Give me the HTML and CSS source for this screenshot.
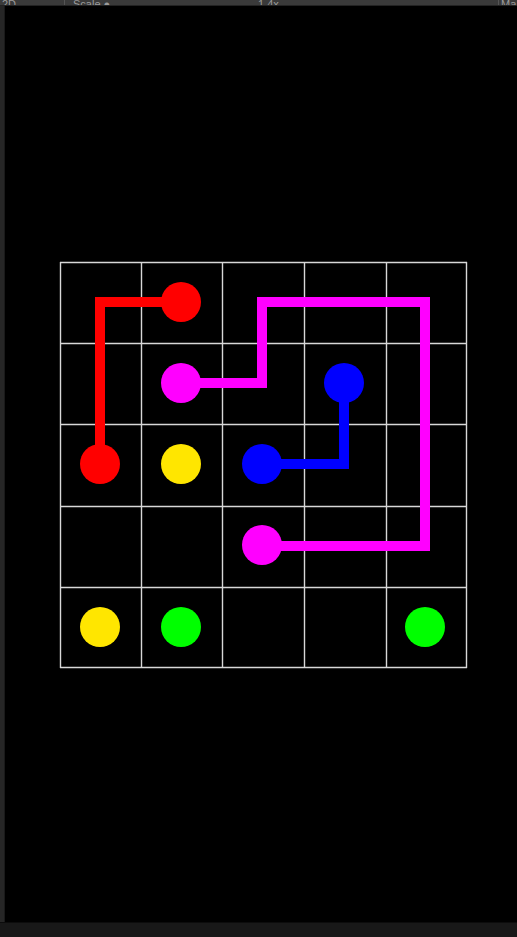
FILE: index.html
```html
<!DOCTYPE html>
<html>
<head>
<meta charset="utf-8">
<link rel="stylesheet" href="styles.css">
</head>
<body>
<div class="topbar">
  <span class="tb-item tb-left">2D</span>
  <span class="tb-item tb-scale">Scale ●</span>
  <span class="tb-item tb-mid">1.4x</span>
  <span class="tb-item tb-right">Ma</span>
</div>
<div class="main">
  <div class="side"></div>
  <div class="view">
    <svg class="board" width="410" height="408" viewBox="59 261 410 408">
      <g class="grid">
        <line x1="60.5" y1="262" x2="60.5" y2="668"/>
        <line x1="141.5" y1="262" x2="141.5" y2="668"/>
        <line x1="222.5" y1="262" x2="222.5" y2="668"/>
        <line x1="304.5" y1="262" x2="304.5" y2="668"/>
        <line x1="386.5" y1="262" x2="386.5" y2="668"/>
        <line x1="466.5" y1="262" x2="466.5" y2="668"/>
        <line x1="60" y1="262.5" x2="467" y2="262.5"/>
        <line x1="60" y1="343.5" x2="467" y2="343.5"/>
        <line x1="60" y1="424.5" x2="467" y2="424.5"/>
        <line x1="60" y1="506.5" x2="467" y2="506.5"/>
        <line x1="60" y1="587.5" x2="467" y2="587.5"/>
        <line x1="60" y1="667.5" x2="467" y2="667.5"/>
      </g>
      <polyline class="pipe" stroke="#ff0000" points="181,302 100,302 100,465"/>
      <polyline class="pipe" stroke="#ff00ff" points="181,383 262,383 262,302 425,302 425,546 263,546"/>
      <polyline class="pipe" stroke="#0000ff" points="344,383 344,464 263,464"/>
      <circle cx="181" cy="302" r="20" fill="#ff0000"/>
      <circle cx="100" cy="464" r="20" fill="#ff0000"/>
      <circle cx="181" cy="383" r="20" fill="#ff00ff"/>
      <circle cx="262" cy="545" r="20" fill="#ff00ff"/>
      <circle cx="344" cy="383" r="20" fill="#0000ff"/>
      <circle cx="262" cy="464" r="20" fill="#0000ff"/>
      <circle cx="181" cy="464" r="20" fill="#ffe600"/>
      <circle cx="100" cy="627" r="20" fill="#ffe600"/>
      <circle cx="181" cy="627" r="20" fill="#00ff00"/>
      <circle cx="425" cy="627" r="20" fill="#00ff00"/>
    </svg>
  </div>
</div>
<div class="bottombar"></div>
</body>
</html>
```
FILE: styles.css
```css
html, body {
  margin: 0;
  padding: 0;
  background: #000;
  width: 517px;
  height: 937px;
  overflow: hidden;
  font-family: "Liberation Sans", Arial, sans-serif;
}
.topbar {
  height: 6px;
  background: #3a3a3a;
  position: relative;
  overflow: hidden;
  display: flex;
  align-items: flex-end;
  border-bottom: 1px solid #232323;
  box-sizing: border-box;
}
.tb-item {
  font-size: 11px;
  line-height: 11px;
  color: #9a9a9a;
  margin-bottom: -5px;
}
.tb-left { padding-left: 2px; width: 62px; border-right: 1px solid #555; }
.tb-scale { padding-left: 8px; width: 185px; }
.tb-mid { width: 240px; }
.tb-right { border-left: 1px solid #555; padding-left: 2px; }
.main {
  display: flex;
  height: 916px;
}
.side {
  width: 5px;
  background: #262626;
  border-right: 1px solid #1a1a1a;
  box-sizing: border-box;
}
.view {
  flex: 1;
  background: #000;
  padding-top: 255px;
  padding-left: 54px;
}
.board {
  display: block;
}
.grid line {
  stroke: #d8d8d8;
  stroke-width: 1.4;
}
.pipe {
  fill: none;
  stroke-width: 10;
  stroke-linecap: square;
  stroke-linejoin: miter;
}
.bottombar {
  height: 15px;
  background: #181818;
  border-top: 1px solid #0c0c0c;
  box-sizing: border-box;
}
```
